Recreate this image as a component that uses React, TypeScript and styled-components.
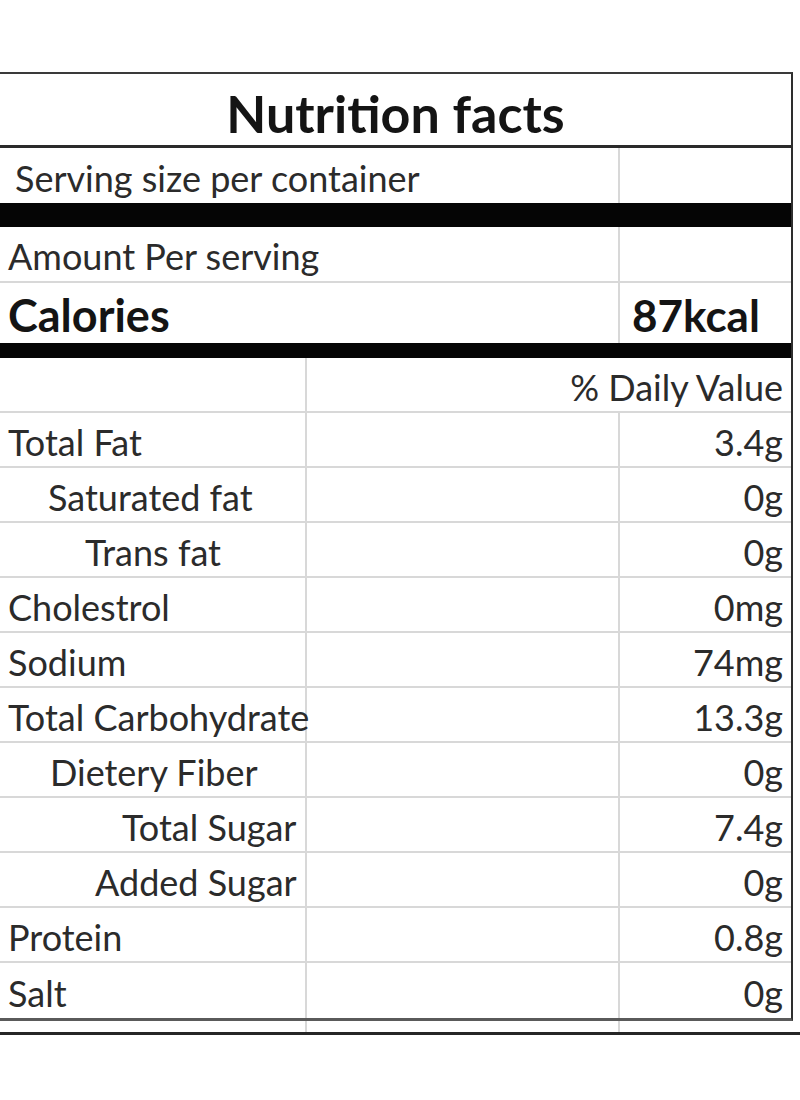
import React from "react";
import styled, { createGlobalStyle } from "styled-components";

const GRID = "#d8d8d8";

const Global = createGlobalStyle`
  html, body { margin: 0; padding: 0; background: #ffffff; }
  body {
    font-family: "Lato", "Liberation Sans", sans-serif;
    color: #2b2b2b;
  }
`;

const Page = styled.div`
  width: 800px;
  padding-top: 72px;
  display: flex;
  flex-direction: column;
`;

const Sheet = styled.div`
  width: 793px;
  box-sizing: border-box;
  border-top: 2px solid #3a3a3a;
  border-right: 2px solid #2e2e2e;
  border-bottom: 3px solid #5a5a5a;
  display: flex;
  flex-direction: column;
`;

const TitleRow = styled.div`
  height: 74px;
  box-sizing: border-box;
  display: flex;
  align-items: center;
  justify-content: center;
  padding-top: 6px;
  border-bottom: 3px solid #2a2a2a;
  font-weight: 700;
  font-size: 52px;
  color: #141414;
`;

const Band = styled.div<{ $h: number }>`
  height: ${(p) => p.$h}px;
  background: #050505;
`;

const Row = styled.div<{ $h?: number; $line?: boolean }>`
  display: grid;
  grid-template-columns: 307px 313px 1fr;
  height: ${(p) => p.$h ?? 55}px;
  box-sizing: border-box;
  border-bottom: ${(p) => (p.$line === false ? "none" : `2px solid ${GRID}`)};
`;

const Cell = styled.div<{
  $span?: string;
  $right?: boolean;
  $indent?: number;
  $divider?: boolean;
  $bold?: boolean;
  $size?: number;
}>`
  grid-column: ${(p) => p.$span ?? "auto"};
  display: flex;
  align-items: center;
  justify-content: ${(p) => (p.$right ? "flex-end" : "flex-start")};
  padding-left: ${(p) => p.$indent ?? 8}px;
  padding-right: 8px;
  padding-top: 4px;
  box-sizing: border-box;
  border-right: ${(p) => (p.$divider ? `2px solid ${GRID}` : "none")};
  white-space: nowrap;
  overflow: visible;
  line-height: 1;
  font-size: ${(p) => p.$size ?? 36}px;
  font-weight: ${(p) => (p.$bold ? 700 : 400)};
  color: ${(p) => (p.$bold ? "#141414" : "#2b2b2b")};
`;

const Tail = styled.div`
  width: 793px;
  height: 11px;
  display: grid;
  grid-template-columns: 307px 313px 1fr;
`;

const TailCell = styled.div`
  border-right: 2px solid ${GRID};
`;

const FinalRule = styled.div`
  width: 800px;
  height: 3px;
  background: #262626;
`;

type Nutrient = { name: string; value: string; indent: number };

const nutrients: Nutrient[] = [
  { name: "Total Fat", value: "3.4g", indent: 8 },
  { name: "Saturated fat", value: "0g", indent: 48 },
  { name: "Trans fat", value: "0g", indent: 85 },
  { name: "Cholestrol", value: "0mg", indent: 8 },
  { name: "Sodium", value: "74mg", indent: 8 },
  { name: "Total Carbohydrate", value: "13.3g", indent: 8 },
  { name: "Dietery Fiber", value: "0g", indent: 50 },
  { name: "Total Sugar", value: "7.4g", indent: 122 },
  { name: "Added Sugar", value: "0g", indent: 95 },
  { name: "Protein", value: "0.8g", indent: 8 },
  { name: "Salt", value: "0g", indent: 8 },
];

export default function App() {
  return (
    <>
      <Global />
      <Page>
        <Sheet>
          <TitleRow>Nutrition facts</TitleRow>
          <Row $line={false}>
            <Cell $span="1 / 3" $indent={15} $divider>
              Serving size per container
            </Cell>
            <Cell />
          </Row>
          <Band $h={24} />
          <Row $h={56}>
            <Cell $span="1 / 3" $divider>
              Amount Per serving
            </Cell>
            <Cell />
          </Row>
          <Row $h={60} $line={false}>
            <Cell $span="1 / 3" $divider $bold $size={45}>
              Calories
            </Cell>
            <Cell $bold $size={44} $indent={12}>
              87kcal
            </Cell>
          </Row>
          <Band $h={15} />
          <Row>
            <Cell $divider />
            <Cell $span="2 / 4" $right>
              % Daily Value
            </Cell>
          </Row>
          {nutrients.map((n, i) => (
            <Row key={n.name} $line={i < nutrients.length - 1}>
              <Cell $indent={n.indent} $divider>
                {n.name}
              </Cell>
              <Cell $divider />
              <Cell $right>{n.value}</Cell>
            </Row>
          ))}
        </Sheet>
        <Tail>
          <TailCell />
          <TailCell />
        </Tail>
        <FinalRule />
      </Page>
    </>
  );
}
